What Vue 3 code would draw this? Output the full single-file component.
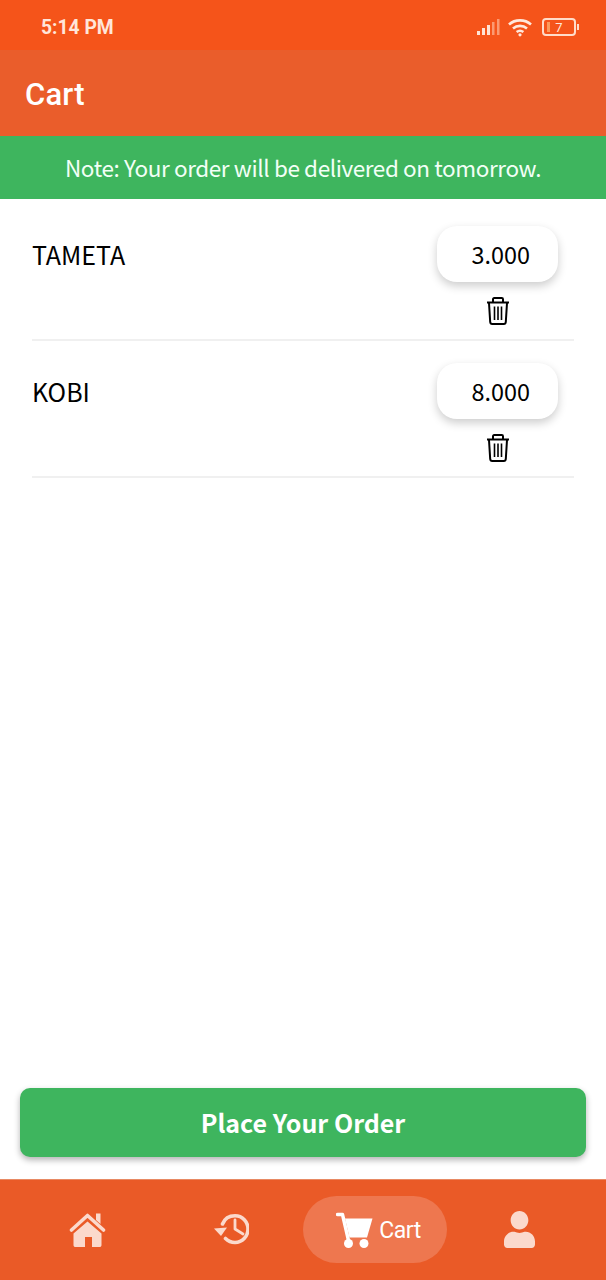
<script setup>
const items = [
  { name: 'TAMETA', qty: '3.000' },
  { name: 'KOBI', qty: '8.000' },
]
</script>

<template>
  <div class="screen">
    <div class="status">
      <span class="time">5:14 PM</span>
      <div class="status-icons">
        <svg class="signal" width="23" height="18" viewBox="0 0 23 18">
          <rect x="0" y="13" width="3" height="4" fill="#ffe3d4" />
          <rect x="5" y="10" width="3" height="7" fill="#ffe3d4" />
          <rect x="10" y="7" width="3" height="10" fill="#ffe3d4" />
          <rect x="15" y="4" width="2.5" height="13" fill="#fb9a72" />
          <rect x="20" y="1" width="2.5" height="16" fill="#fb9a72" />
        </svg>
        <svg class="wifi" width="24" height="19" viewBox="0 0 24 19" fill="none" stroke="#ffe8dc" stroke-width="2.6">
          <path d="M1 6.5C7 1 17 1 23 6.5" />
          <path d="M5 10.5C9 7 15 7 19 10.5" />
          <path d="M8.6 14C10.5 12.6 13.5 12.6 15.4 14" />
          <circle cx="12" cy="16.8" r="1.6" fill="#ffe8dc" stroke="none" />
        </svg>
        <div class="battery"><i class="level"></i><span>7</span></div>
        <i class="battery-tip"></i>
      </div>
    </div>

    <header class="title-bar">Cart</header>
    <div class="note">Note: Your order will be delivered on tomorrow.</div>

    <main class="list">
      <div v-for="item in items" :key="item.name" class="row">
        <span class="name">{{ item.name }}</span>
        <div class="controls">
          <div class="qty">{{ item.qty }}</div>
          <svg class="trash" width="24" height="28" viewBox="0 0 24 28" fill="none" stroke="#000" stroke-width="2">
            <path d="M1 5.5H23" />
            <path d="M7 5V2.2C7 1.6 7.5 1 8.2 1H15.8C16.5 1 17 1.6 17 2.2V5" />
            <path d="M3 6L4.2 25C4.3 26.2 5 27 6.2 27H17.8C19 27 19.7 26.2 19.8 25L21 6" />
            <path d="M8.5 9.5V23M12 9.5V23M15.5 9.5V23" stroke-width="1.6" />
          </svg>
        </div>
      </div>
    </main>

    <div class="action">
      <button class="order">Place Your Order</button>
    </div>

    <nav class="tabs">
      <div class="tab">
        <svg width="38" height="36" viewBox="0 0 38 36" fill="#fbd9cc">
          <path d="M3.5 18L19.5 3.5L35.5 18" fill="none" stroke="#fbd9cc" stroke-width="3.6" stroke-linecap="round" stroke-linejoin="round" />
          <path d="M28 1.5H32.5V12L28 8Z" />
          <path d="M19.5 9.5L33.5 21.5V33C33.5 34.4 32.6 35 31.5 35H24V25H17V35H7.5C6.4 35 5.5 34.4 5.5 33V21.5Z" />
        </svg>
      </div>
      <div class="tab">
        <svg width="36" height="34" viewBox="0 0 36 34" fill="none" stroke="#fbd9cc">
          <path d="M9.5 11C11.5 6 16 2.8 22 2.8C29.5 2.8 35 8.8 35 16C35 23.5 29.2 29.5 22 29.5C18 29.5 15 28 12.5 25.5" stroke-width="3.6" stroke-linecap="round" />
          <path d="M1 15.5L14 14.5L8 23Z" fill="#fbd9cc" stroke="none" />
          <path d="M22 7V16L30 21" stroke-width="2.8" stroke-linecap="round" stroke-linejoin="round" />
        </svg>
      </div>
      <div class="tab active">
        <svg width="37" height="36" viewBox="0 0 37 36" fill="#fff">
          <path d="M1.5 2.5H6.5L12.5 28.5" fill="none" stroke="#fff" stroke-width="3.4" stroke-linecap="round" stroke-linejoin="round" />
          <path d="M9 6.5H36.5L31 25.5H13.5Z" />
          <circle cx="12.5" cy="31.5" r="4.5" />
          <circle cx="28" cy="31.5" r="4.5" />
        </svg>
        <span class="tab-label">Cart</span>
      </div>
      <div class="tab">
        <svg width="31" height="37" viewBox="0 0 448 512" preserveAspectRatio="none" fill="#fbd9cc">
          <path d="M224 256c70.7 0 128-57.3 128-128S294.7 0 224 0 96 57.3 96 128s57.3 128 128 128zm89.6 32h-16.7c-22.2 10.2-46.9 16-72.9 16s-50.6-5.8-72.9-16h-16.7C60.2 288 0 348.2 0 422.4V464c0 26.5 21.5 48 48 48h352c26.5 0 48-21.5 48-48v-41.6c0-74.2-60.2-134.4-134.4-134.4z" />
        </svg>
      </div>
    </nav>
  </div>
</template>

<style scoped>
.screen {
  width: 606px;
  height: 1280px;
  display: flex;
  flex-direction: column;
  background: #fff;
  font-family: "Noto Sans CJK SC", "Noto Sans", sans-serif;
  overflow: hidden;
}
.status {
  height: 50px;
  flex: none;
  background: #f5541a;
  display: flex;
  align-items: center;
  justify-content: space-between;
  padding: 4px 27px 0 41px;
  box-sizing: border-box;
}
.time {
  font-family: Roboto, sans-serif;
  font-weight: 700;
  font-size: 19.3px;
  color: #ffe6da;
}
.status-icons {
  display: flex;
  align-items: center;
}
.signal {
  margin-right: 8px;
}
.wifi {
  margin-right: 10px;
}
.battery {
  width: 30px;
  height: 14px;
  border: 2px solid #ffdcc9;
  border-radius: 4px;
  display: flex;
  align-items: center;
  justify-content: center;
  position: relative;
  font-family: Roboto, sans-serif;
  font-size: 13px;
  color: #ffe6da;
}
.level {
  position: absolute;
  left: 3px;
  top: 2px;
  bottom: 2px;
  width: 3px;
  background: #fb9a5a;
}
.battery-tip {
  width: 2px;
  height: 6px;
  margin-left: 1px;
  background: #ffdcc9;
}
.title-bar {
  height: 86px;
  flex: none;
  background: #ea5d2b;
  display: flex;
  align-items: center;
  padding: 2px 0 0 25px;
  box-sizing: border-box;
  font-family: Roboto, sans-serif;
  font-weight: 500;
  font-size: 31px;
  letter-spacing: 0.2px;
  color: #fff;
}
.note {
  height: 63px;
  flex: none;
  box-sizing: border-box;
  padding-bottom: 2px;
  background: #3eb55e;
  color: #f2fff6;
  display: flex;
  align-items: center;
  justify-content: center;
  font-size: 22.5px;
  letter-spacing: -0.4px;
}
.list {
  flex: 1;
  padding: 5px 32px 0;
}
.row {
  height: 137px;
  box-sizing: border-box;
  border-bottom: 2px solid #f0f0f0;
  display: flex;
  justify-content: space-between;
  padding: 22px 16px 0 0;
}
.name {
  font-size: 25px;
  line-height: 56px;
  color: #000;
}
.controls {
  display: flex;
  flex-direction: column;
  align-items: center;
  gap: 15px;
}
.qty {
  width: 121px;
  height: 56px;
  box-sizing: border-box;
  background: #fff;
  border-radius: 20px;
  box-shadow: 0 4px 10px rgba(0, 0, 0, 0.2);
  padding-right: 28px;
  text-align: right;
  line-height: 57px;
  font-size: 23.4px;
  color: #000;
}
.action {
  padding: 0 20px 22px;
  flex: none;
}
.order {
  display: block;
  width: 100%;
  height: 69px;
  border: none;
  border-radius: 10px;
  background: #3eb55e;
  box-shadow: 0 3px 6px rgba(0, 0, 0, 0.3);
  color: #fff;
  font-family: inherit;
  font-size: 25px;
  font-weight: 700;
  padding: 0 0 2px;
}
.tabs {
  height: 101px;
  flex: none;
  box-sizing: border-box;
  background: #ea5a27;
  border-top: 1px solid #e88a64;
  display: grid;
  grid-template-columns: repeat(4, 144px);
  padding: 16px 15px 17px;
  align-items: stretch;
}
.tab {
  display: flex;
  align-items: center;
  justify-content: center;
  border-radius: 34px;
}
.tab.active {
  background: #ee774f;
  gap: 6px;
  padding-left: 7px;
}
.tab-label {
  font-family: Roboto, sans-serif;
  font-size: 23px;
  letter-spacing: -0.5px;
  padding-top: 1px;
  color: #fff;
}
</style>

<style>
html, body {
  margin: 0;
  background: #fff;
}
</style>
